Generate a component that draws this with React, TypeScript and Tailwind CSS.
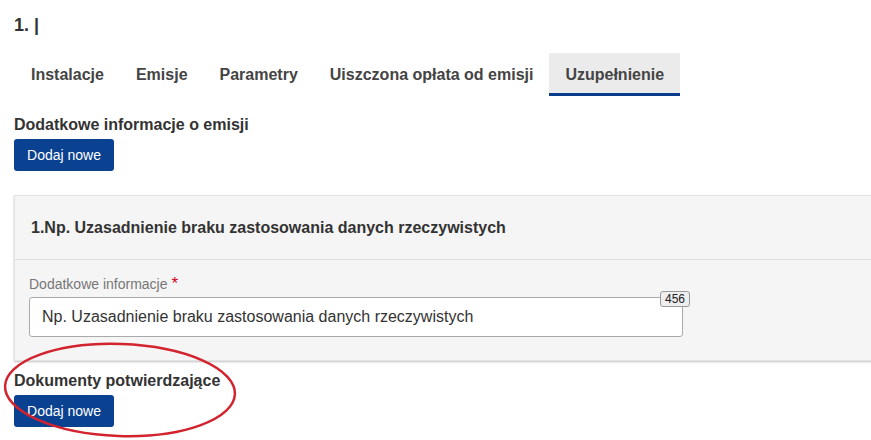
import React from "react";

const tabs = ["Instalacje", "Emisje", "Parametry", "Uiszczona opłata od emisji", "Uzupełnienie"];
const activeTab = "Uzupełnienie";

const AddButton: React.FC = () => (
    <button className="h-[32px] w-[100px] rounded-[3px] bg-[#0b4191] text-[14px] text-white">Dodaj nowe</button>
);

export default function App() {
    return (
        <div className="relative h-[440px] w-[871px] overflow-hidden bg-white pl-[14px] text-[#333] [font-family:'Liberation_Sans',Arial,sans-serif]">
            <h1 className="pt-[13px] text-[18px] font-bold leading-[24px]">1. |</h1>

            {/* tabs */}
            <div className="mt-[16px] flex pl-[1px]">
                {tabs.map((t) => (
                    <div
                        key={t}
                        className={
                            t === activeTab
                                ? "flex h-[43px] items-center border-b-[3px] border-[#0b3d8f] bg-[#ebebeb] px-[16px] pt-[3px] text-[16px] font-bold text-[#444]"
                                : "flex h-[43px] items-center px-[16px] text-[16px] font-bold text-[#444]"
                        }
                    >
                        {t}
                    </div>
                ))}
            </div>

            <h2 className="mt-[19px] text-[16px] font-bold leading-[20px]">Dodatkowe informacje o emisji</h2>
            <div className="mt-[4px]">
                <AddButton />
            </div>

            {/* panel */}
            <div className="mt-[24px] h-[166px] w-[880px] border border-r-0 border-[#e3e3e3] bg-[#f5f5f5] shadow-[0_1px_2px_rgba(0,0,0,0.25)]">
                <div className="flex h-[64px] items-center border-b border-[#dedede] pl-[16px] text-[16px] font-bold">
                    1.Np. Uzasadnienie braku zastosowania danych rzeczywistych
                </div>
                <div className="pl-[14px] pt-[15px]">
                    <div className="text-[14px] leading-[18px] text-[#777]">
                        Dodatkowe informacje <span className="text-[17px] text-[#d0021b]">*</span>
                    </div>
                    <div className="relative mt-[4px] w-[654px]">
                        <div className="flex h-[40px] items-center rounded-[3px] border border-[#aaa] bg-white px-[12px] text-[16px] text-[#333]">
                            Np. Uzasadnienie braku zastosowania danych rzeczywistych
                        </div>
                        <span className="absolute right-[-7px] top-[-6px] rounded-[3px] border border-[#999] bg-[#eee] px-[4px] text-[12px] leading-[14px] text-[#222]">
                            456
                        </span>
                    </div>
                </div>
            </div>

            <h2 className="mt-[10px] text-[16px] font-bold leading-[20px]">Dokumenty potwierdzające</h2>
            <div className="mt-[4px]">
                <AddButton />
            </div>

            {/* red annotation ellipse */}
            <svg className="pointer-events-none absolute left-0 top-[338px]" width="245" height="102" viewBox="0 0 245 102">
                <ellipse cx="120" cy="52" rx="115" ry="46" transform="rotate(2 120 52)" fill="none" stroke="#d2232f" strokeWidth="2.5" />
            </svg>
        </div>
    );
}
